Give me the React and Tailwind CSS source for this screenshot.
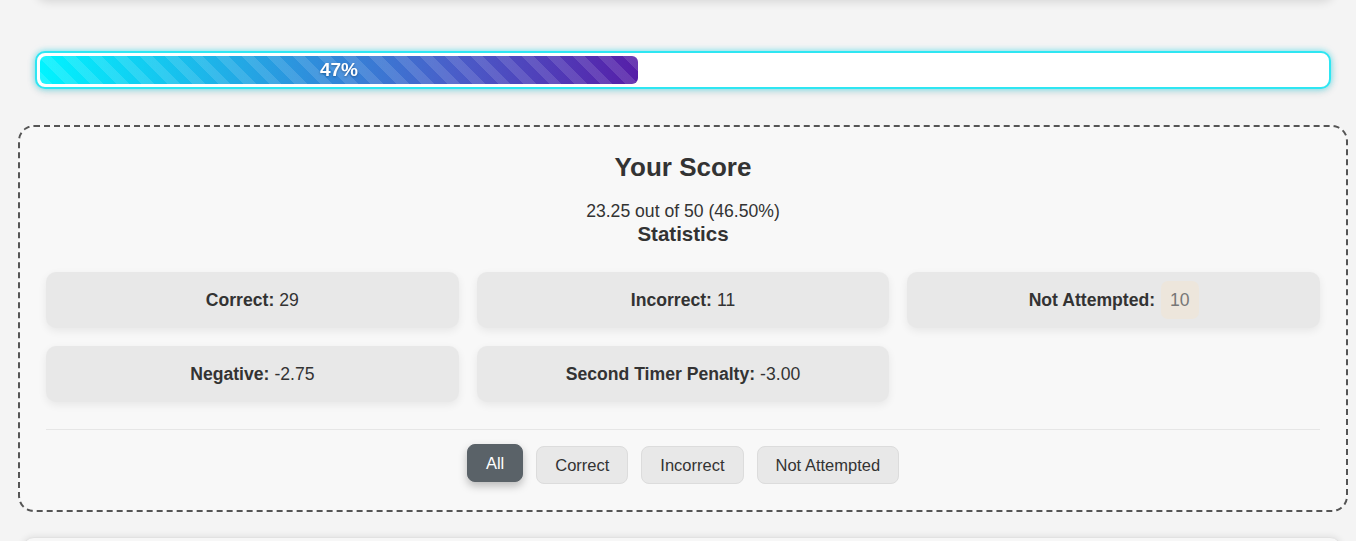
export default function App() {
  const percent = 46.5;
  const stats = [
    { label: 'Correct:', value: '29' },
    { label: 'Incorrect:', value: '11' },
    { label: 'Not Attempted:', value: '10', badge: true },
    { label: 'Negative:', value: '-2.75' },
    { label: 'Second Timer Penalty:', value: '-3.00' },
  ];
  const filters = ['All', 'Correct', 'Incorrect', 'Not Attempted'];

  return (
    <div className="min-h-screen bg-[#f4f4f4] flex flex-col pl-[18px] pr-[8px] text-[#333] font-['Liberation_Sans',Arial,sans-serif] overflow-hidden">
      {/* previous card, mostly scrolled off */}
      <div className="-mt-[22px] h-[22px] ml-[18px] mr-[14px] rounded-b-xl bg-[#f6f6f6] shadow-[0_2px_10px_rgba(0,0,0,0.12)]" />

      {/* progress */}
      <div className="mt-[51px] ml-[17px] mr-[17px] h-[38px] p-[3px] rounded-[10px] border-2 border-[#2ee6f2] bg-white shadow-[0_0_6px_rgba(0,230,255,0.55),0_2px_10px_rgba(0,0,0,0.12)]">
        <div
          className="h-full rounded-[6px] flex items-center justify-center bg-[image:repeating-linear-gradient(45deg,rgba(255,255,255,0.12)_0_9px,transparent_9px_18px),linear-gradient(to_right,#00f4ff,#2e8fdc_45%,#4a5cc8_70%,#561ea8)]"
          style={{ width: `${percent}%` }}
        >
          <span className="text-white font-bold text-[19px] drop-shadow-[0_1px_1px_rgba(0,0,0,0.3)]">47%</span>
        </div>
      </div>

      {/* score */}
      <div className="mt-[36px] border-2 border-dashed border-[#555] rounded-[16px] bg-[#f8f8f8] px-[26px] pt-[24px] pb-[26px]">
        <h2 className="text-center text-[26px] font-bold leading-[32px]">Your Score</h2>
        <p className="text-center text-[17.6px] leading-[22px] mt-[17px]">23.25 out of 50 (46.50%)</p>
        <h3 className="text-center text-[20.5px] font-bold leading-[24px]">Statistics</h3>

        <div className="grid grid-cols-3 gap-[18px] mt-[26px]">
          {stats.map((s) => (
            <div
              key={s.label}
              className="h-[56px] rounded-[10px] bg-[#e8e8e8] shadow-[0_3px_8px_rgba(0,0,0,0.07)] flex items-center justify-center text-[17.6px]"
            >
              <span className="font-bold">{s.label}</span>
              {s.badge ? (
                <span className="ml-[6px] h-[38px] px-[9px] rounded-[7px] bg-[#ede6dc] text-[#777] flex items-center">{s.value}</span>
              ) : (
                <span className="ml-[5px]">{s.value}</span>
              )}
            </div>
          ))}
        </div>

        <div className="mt-[27px] border-t border-[#e6e6e6]" />

        <div className="flex justify-center items-start gap-[13px] mt-[16px]">
          {filters.map((f) =>
            f === 'All' ? (
              <button
                key={f}
                className="h-[38px] px-[18px] rounded-[8px] bg-[#5a6268] text-white text-[16.5px] border border-[#5a6268] shadow-[0_4px_8px_rgba(0,0,0,0.25)] -translate-y-[2px]"
              >
                {f}
              </button>
            ) : (
              <button
                key={f}
                className="h-[38px] px-[18px] rounded-[8px] bg-[#e8e8e8] text-[#333] text-[16.5px] border border-[#dcdcdc]"
              >
                {f}
              </button>
            )
          )}
        </div>
      </div>

      {/* next card */}
      <div className="mt-[25px] ml-[4px] mr-[6px] h-[60px] rounded-t-xl border border-[#e2e2e2] bg-[#f7f7f7] shadow-[0_-1px_6px_rgba(0,0,0,0.08)]" />
    </div>
  );
}
